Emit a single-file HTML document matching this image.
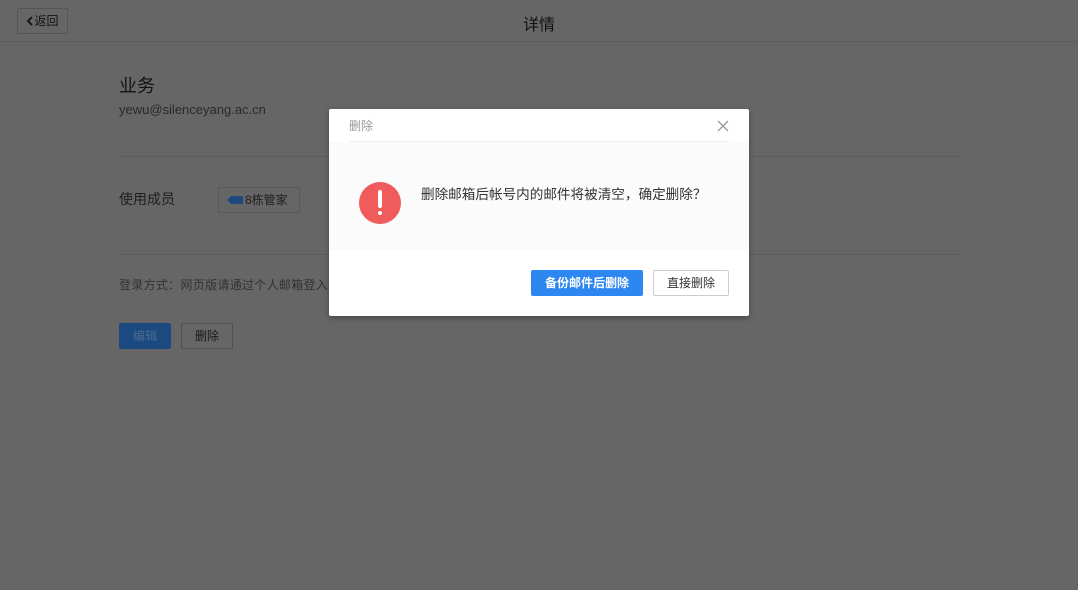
<!DOCTYPE html>
<html><head><meta charset="utf-8"><style>
*{margin:0;padding:0;box-sizing:border-box}
body{width:1078px;height:590px;background:#666;font-family:"Liberation Sans","Noto Sans CJK SC",sans-serif;position:relative;overflow:hidden;color:#111}
.a{position:absolute}
.btn{position:absolute;font-size:12px;text-align:center;border-radius:2px}
</style></head><body>
<div class="a" style="left:0;top:0;width:1078px;height:42px;border-bottom:1px solid #5c5c5c"></div>
<div class="btn" style="left:17px;top:8px;width:51px;height:26px;border:1px solid #555;line-height:24px;font-size:12px;color:#111"><svg width="8" height="10" viewBox="0 0 8 10" style="vertical-align:-1px"><path d="M6 1L2 5l4 4" stroke="#111" stroke-width="1.8" fill="none"/></svg>返回</div>
<div class="a" style="left:0;top:11px;width:1078px;text-align:center;font-size:16px;color:#111">详情</div>
<div class="a" style="left:119px;top:72px;font-size:18px;color:#111">业务</div>
<div class="a" style="left:119px;top:102px;font-size:13px;color:#2a2a2a">yewu@silenceyang.ac.cn</div>
<div class="a" style="left:119px;top:156px;width:841px;height:1px;background:#5d5d5d"></div>
<div class="a" style="left:119px;top:189px;font-size:14px;color:#1e1e1e">使用成员</div>
<div class="btn" style="left:218px;top:187px;width:82px;height:26px;border:1px solid #5a5a5a;line-height:24px;color:#1e1e1e;text-align:left;padding-left:8px"><span style="display:inline-block;width:16px;height:8px;background:#1e4a80;margin-right:2px;clip-path:polygon(25% 0,100% 0,100% 100%,25% 100%,0 50%)"></span>8栋管家</div>
<div class="a" style="left:119px;top:254px;width:841px;height:1px;background:#5d5d5d"></div>
<div class="a" style="left:119px;top:276px;font-size:12px;color:#333;letter-spacing:0.3px">登录方式：网页版请通过个人邮箱登入，</div>
<div class="btn" style="left:119px;top:323px;width:52px;height:26px;background:#1b4a80;line-height:26px;color:#4a6a90">编辑</div>
<div class="btn" style="left:181px;top:323px;width:52px;height:26px;border:1px solid #505050;line-height:24px;color:#1a1a1a">删除</div>

<div class="a" style="left:329px;top:109px;width:420px;height:207px;background:#fff;border-radius:2px;box-shadow:0 2px 6px rgba(0,0,0,.3)">
<div class="a" style="left:20px;top:8px;font-size:12px;color:#999">删除</div>
<svg class="a" style="left:388px;top:11px" width="12" height="12" viewBox="0 0 12 12"><path d="M1 1L11 11M11 1L1 11" stroke="#999" stroke-width="1.3"/></svg>
<div class="a" style="left:20px;top:32px;width:380px;height:1px;background:#eee"></div>
<div class="a" style="left:0;top:33px;width:420px;height:108px;background:#fbfbfb"></div>
<div class="a" style="left:30px;top:73px;width:42px;height:42px;border-radius:50%;background:#f05c5c"></div>
<div class="a" style="left:49px;top:81px;width:4px;height:18px;background:#fff;border-radius:2px"></div>
<div class="a" style="left:49px;top:102px;width:4px;height:4px;background:#fff;border-radius:50%"></div>
<div class="a" style="left:92px;top:74px;font-size:13.6px;color:#333;white-space:nowrap">删除邮箱后帐号内的邮件将被清空，确定删除？</div>
<div class="btn" style="left:202px;top:161px;width:112px;height:26px;background:#2d87f0;color:#fff;line-height:26px;font-weight:bold">备份邮件后删除</div>
<div class="btn" style="left:324px;top:161px;width:76px;height:26px;border:1px solid #ccc;color:#333;line-height:24px">直接删除</div>
</div>
</body></html>
